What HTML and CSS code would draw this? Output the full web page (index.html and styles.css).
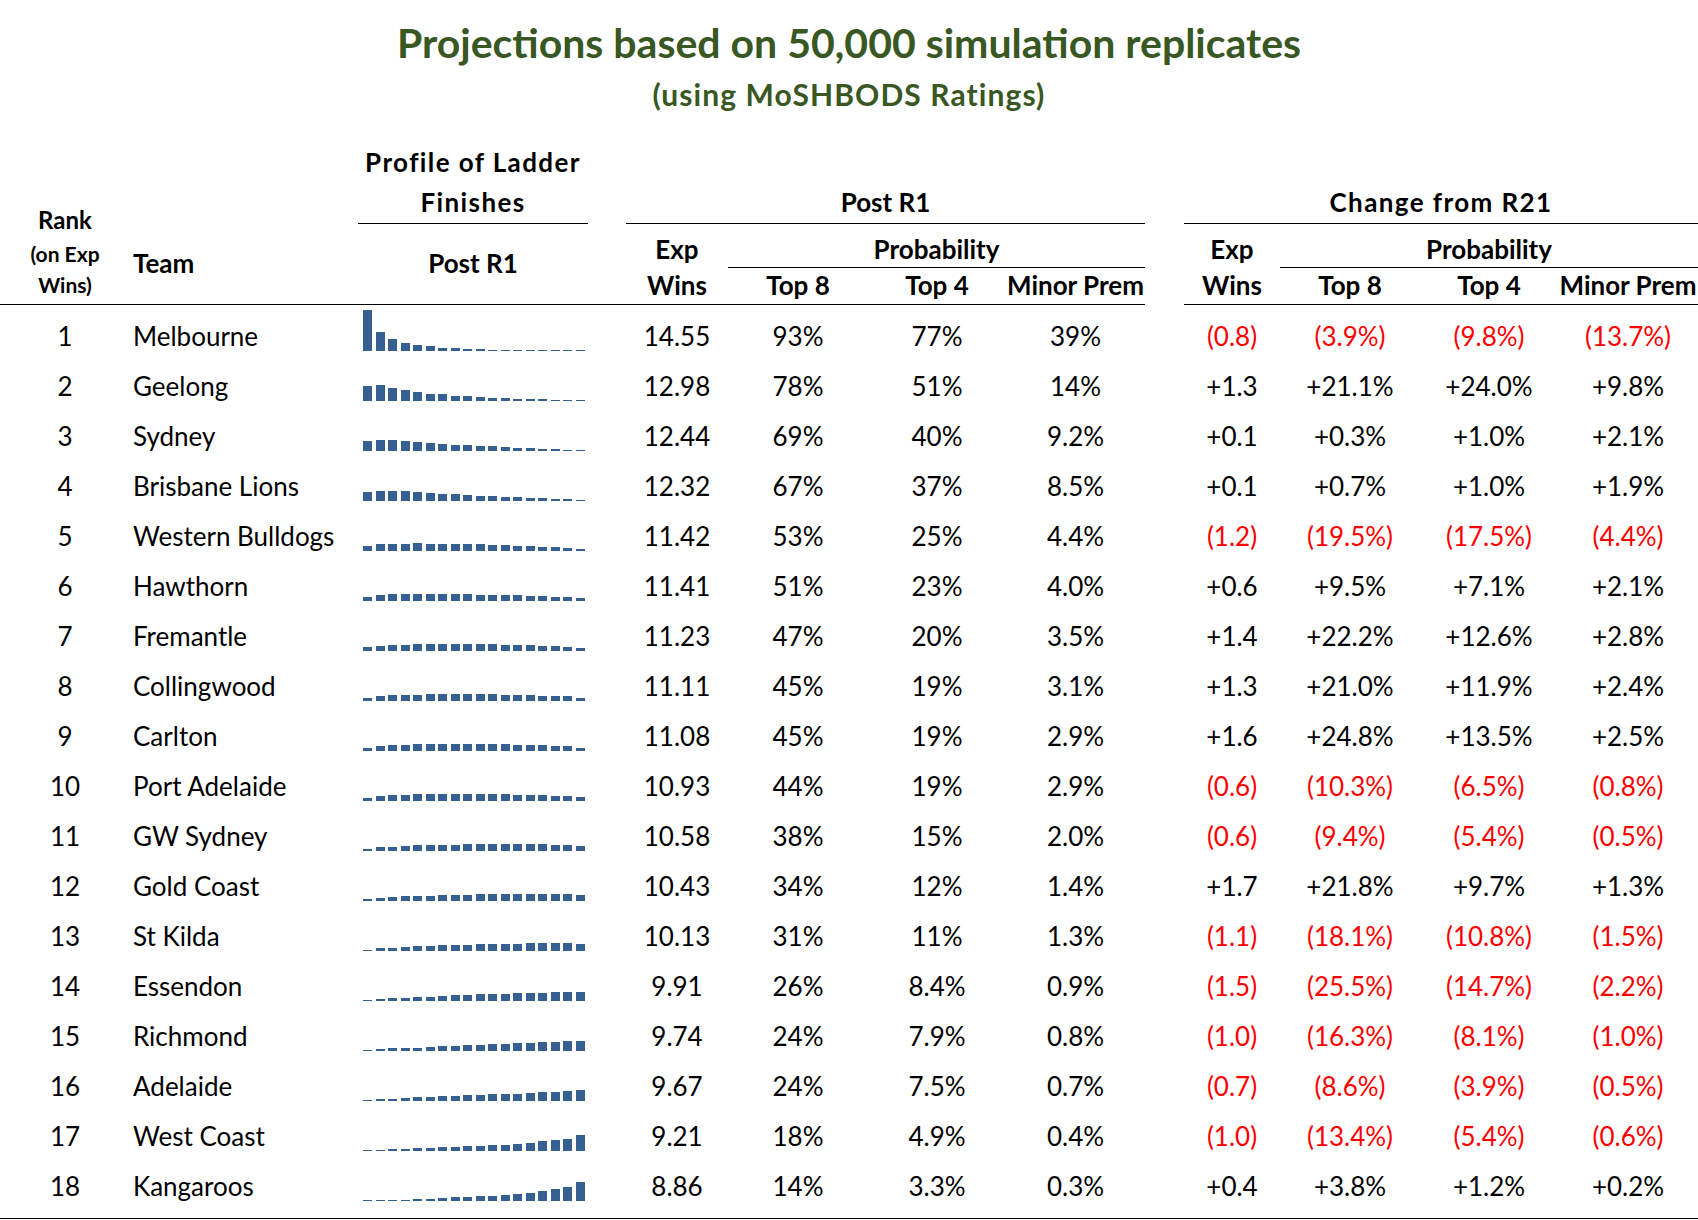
FILE: index.html
```html
<!DOCTYPE html>
<html lang="en">
<head>
<meta charset="utf-8">
<title>Projections based on 50,000 simulation replicates</title>
<link rel="stylesheet" href="styles.css">
</head>
<body>
<div class="titles">
  <div class="title">Projections based on 50,000 simulation replicates</div>
  <div class="subtitle">(using MoSHBODS Ratings)</div>
</div>

<div class="cols head">
  <div class="h-pl1 wide">Profile of Ladder</div>
  <div class="h-grp h-pl2 wide">Finishes</div>
  <div class="h-grp h-post">Post R1</div>
  <div class="h-grp h-chg wide">Change from R21</div>

  <div class="h-rank">
    <div class="rank-main">Rank</div>
    <div class="rank-sub first">(on Exp</div>
    <div class="rank-sub">Wins)</div>
  </div>
  <div class="h-team">Team</div>
  <div class="h-pl3">Post R1</div>
  <div class="h-gap"></div>

  <div class="h-top h-exp1">Exp</div>
  <div class="h-top h-prob h-prob1">Probability</div>
  <div class="h-bot h-col5">Wins</div>
  <div class="h-bot h-col6">Top 8</div>
  <div class="h-bot h-col7">Top 4</div>
  <div class="h-bot h-col8">Minor Prem</div>

  <div class="h-top h-exp2">Exp</div>
  <div class="h-top h-prob h-prob2">Probability</div>
  <div class="h-bot h-col10">Wins</div>
  <div class="h-bot h-col11">Top 8</div>
  <div class="h-bot h-col12">Top 4</div>
  <div class="h-bot h-col13">Minor Prem</div>
</div>

<div class="body">
  <div class="cols row">
    <div class="c">1</div><div class="team">Melbourne</div>
    <div class="spark"><i style="height:41px"></i><i style="height:19px"></i><i style="height:12px"></i><i style="height:8px"></i><i style="height:6px"></i><i style="height:5px"></i><i style="height:3px"></i><i style="height:3px"></i><i style="height:2px"></i><i style="height:2px"></i><i style="height:1px"></i><i style="height:1px"></i><i style="height:1px"></i><i style="height:1px"></i><i style="height:1px"></i><i style="height:1px"></i><i style="height:1px"></i><i style="height:1px"></i></div>
    <div></div><div class="c">14.55</div><div class="c">93%</div><div class="c">77%</div><div class="c">39%</div>
    <div></div><div class="c neg">(0.8)</div><div class="c neg">(3.9%)</div><div class="c neg">(9.8%)</div><div class="c neg">(13.7%)</div>
  </div>
  <div class="cols row">
    <div class="c">2</div><div class="team">Geelong</div>
    <div class="spark"><i style="height:15px"></i><i style="height:16px"></i><i style="height:13px"></i><i style="height:11px"></i><i style="height:9px"></i><i style="height:7px"></i><i style="height:7px"></i><i style="height:5px"></i><i style="height:5px"></i><i style="height:4px"></i><i style="height:3px"></i><i style="height:3px"></i><i style="height:2px"></i><i style="height:2px"></i><i style="height:2px"></i><i style="height:1px"></i><i style="height:1px"></i><i style="height:1px"></i></div>
    <div></div><div class="c">12.98</div><div class="c">78%</div><div class="c">51%</div><div class="c">14%</div>
    <div></div><div class="c">+1.3</div><div class="c">+21.1%</div><div class="c">+24.0%</div><div class="c">+9.8%</div>
  </div>
  <div class="cols row">
    <div class="c">3</div><div class="team">Sydney</div>
    <div class="spark"><i style="height:10px"></i><i style="height:11px"></i><i style="height:11px"></i><i style="height:10px"></i><i style="height:9px"></i><i style="height:8px"></i><i style="height:7px"></i><i style="height:6px"></i><i style="height:6px"></i><i style="height:5px"></i><i style="height:5px"></i><i style="height:4px"></i><i style="height:3px"></i><i style="height:3px"></i><i style="height:2px"></i><i style="height:2px"></i><i style="height:1px"></i><i style="height:1px"></i></div>
    <div></div><div class="c">12.44</div><div class="c">69%</div><div class="c">40%</div><div class="c">9.2%</div>
    <div></div><div class="c">+0.1</div><div class="c">+0.3%</div><div class="c">+1.0%</div><div class="c">+2.1%</div>
  </div>
  <div class="cols row">
    <div class="c">4</div><div class="team">Brisbane Lions</div>
    <div class="spark"><i style="height:9px"></i><i style="height:10px"></i><i style="height:10px"></i><i style="height:10px"></i><i style="height:9px"></i><i style="height:8px"></i><i style="height:7px"></i><i style="height:7px"></i><i style="height:6px"></i><i style="height:5px"></i><i style="height:5px"></i><i style="height:4px"></i><i style="height:4px"></i><i style="height:3px"></i><i style="height:3px"></i><i style="height:2px"></i><i style="height:2px"></i><i style="height:1px"></i></div>
    <div></div><div class="c">12.32</div><div class="c">67%</div><div class="c">37%</div><div class="c">8.5%</div>
    <div></div><div class="c">+0.1</div><div class="c">+0.7%</div><div class="c">+1.0%</div><div class="c">+1.9%</div>
  </div>
  <div class="cols row">
    <div class="c">5</div><div class="team">Western Bulldogs</div>
    <div class="spark"><i style="height:5px"></i><i style="height:7px"></i><i style="height:7px"></i><i style="height:7px"></i><i style="height:8px"></i><i style="height:7px"></i><i style="height:7px"></i><i style="height:7px"></i><i style="height:7px"></i><i style="height:7px"></i><i style="height:6px"></i><i style="height:6px"></i><i style="height:5px"></i><i style="height:5px"></i><i style="height:4px"></i><i style="height:4px"></i><i style="height:3px"></i><i style="height:2px"></i></div>
    <div></div><div class="c">11.42</div><div class="c">53%</div><div class="c">25%</div><div class="c">4.4%</div>
    <div></div><div class="c neg">(1.2)</div><div class="c neg">(19.5%)</div><div class="c neg">(17.5%)</div><div class="c neg">(4.4%)</div>
  </div>
  <div class="cols row">
    <div class="c">6</div><div class="team">Hawthorn</div>
    <div class="spark"><i style="height:4px"></i><i style="height:6px"></i><i style="height:7px"></i><i style="height:7px"></i><i style="height:7px"></i><i style="height:7px"></i><i style="height:7px"></i><i style="height:7px"></i><i style="height:7px"></i><i style="height:6px"></i><i style="height:6px"></i><i style="height:6px"></i><i style="height:6px"></i><i style="height:5px"></i><i style="height:5px"></i><i style="height:4px"></i><i style="height:4px"></i><i style="height:3px"></i></div>
    <div></div><div class="c">11.41</div><div class="c">51%</div><div class="c">23%</div><div class="c">4.0%</div>
    <div></div><div class="c">+0.6</div><div class="c">+9.5%</div><div class="c">+7.1%</div><div class="c">+2.1%</div>
  </div>
  <div class="cols row">
    <div class="c">7</div><div class="team">Fremantle</div>
    <div class="spark"><i style="height:4px"></i><i style="height:5px"></i><i style="height:6px"></i><i style="height:6px"></i><i style="height:7px"></i><i style="height:7px"></i><i style="height:7px"></i><i style="height:7px"></i><i style="height:7px"></i><i style="height:7px"></i><i style="height:7px"></i><i style="height:6px"></i><i style="height:6px"></i><i style="height:6px"></i><i style="height:5px"></i><i style="height:5px"></i><i style="height:4px"></i><i style="height:3px"></i></div>
    <div></div><div class="c">11.23</div><div class="c">47%</div><div class="c">20%</div><div class="c">3.5%</div>
    <div></div><div class="c">+1.4</div><div class="c">+22.2%</div><div class="c">+12.6%</div><div class="c">+2.8%</div>
  </div>
  <div class="cols row">
    <div class="c">8</div><div class="team">Collingwood</div>
    <div class="spark"><i style="height:3px"></i><i style="height:5px"></i><i style="height:6px"></i><i style="height:6px"></i><i style="height:6px"></i><i style="height:7px"></i><i style="height:7px"></i><i style="height:7px"></i><i style="height:7px"></i><i style="height:7px"></i><i style="height:7px"></i><i style="height:6px"></i><i style="height:6px"></i><i style="height:6px"></i><i style="height:5px"></i><i style="height:5px"></i><i style="height:5px"></i><i style="height:3px"></i></div>
    <div></div><div class="c">11.11</div><div class="c">45%</div><div class="c">19%</div><div class="c">3.1%</div>
    <div></div><div class="c">+1.3</div><div class="c">+21.0%</div><div class="c">+11.9%</div><div class="c">+2.4%</div>
  </div>
  <div class="cols row">
    <div class="c">9</div><div class="team">Carlton</div>
    <div class="spark"><i style="height:3px"></i><i style="height:5px"></i><i style="height:6px"></i><i style="height:6px"></i><i style="height:7px"></i><i style="height:7px"></i><i style="height:7px"></i><i style="height:7px"></i><i style="height:7px"></i><i style="height:7px"></i><i style="height:7px"></i><i style="height:7px"></i><i style="height:6px"></i><i style="height:6px"></i><i style="height:6px"></i><i style="height:5px"></i><i style="height:5px"></i><i style="height:3px"></i></div>
    <div></div><div class="c">11.08</div><div class="c">45%</div><div class="c">19%</div><div class="c">2.9%</div>
    <div></div><div class="c">+1.6</div><div class="c">+24.8%</div><div class="c">+13.5%</div><div class="c">+2.5%</div>
  </div>
  <div class="cols row">
    <div class="c">10</div><div class="team">Port Adelaide</div>
    <div class="spark"><i style="height:3px"></i><i style="height:5px"></i><i style="height:6px"></i><i style="height:6px"></i><i style="height:7px"></i><i style="height:7px"></i><i style="height:7px"></i><i style="height:7px"></i><i style="height:7px"></i><i style="height:7px"></i><i style="height:7px"></i><i style="height:7px"></i><i style="height:6px"></i><i style="height:6px"></i><i style="height:6px"></i><i style="height:5px"></i><i style="height:5px"></i><i style="height:4px"></i></div>
    <div></div><div class="c">10.93</div><div class="c">44%</div><div class="c">19%</div><div class="c">2.9%</div>
    <div></div><div class="c neg">(0.6)</div><div class="c neg">(10.3%)</div><div class="c neg">(6.5%)</div><div class="c neg">(0.8%)</div>
  </div>
  <div class="cols row">
    <div class="c">11</div><div class="team">GW Sydney</div>
    <div class="spark"><i style="height:2px"></i><i style="height:4px"></i><i style="height:4px"></i><i style="height:5px"></i><i style="height:6px"></i><i style="height:6px"></i><i style="height:6px"></i><i style="height:6px"></i><i style="height:7px"></i><i style="height:7px"></i><i style="height:7px"></i><i style="height:7px"></i><i style="height:7px"></i><i style="height:7px"></i><i style="height:7px"></i><i style="height:6px"></i><i style="height:6px"></i><i style="height:5px"></i></div>
    <div></div><div class="c">10.58</div><div class="c">38%</div><div class="c">15%</div><div class="c">2.0%</div>
    <div></div><div class="c neg">(0.6)</div><div class="c neg">(9.4%)</div><div class="c neg">(5.4%)</div><div class="c neg">(0.5%)</div>
  </div>
  <div class="cols row">
    <div class="c">12</div><div class="team">Gold Coast</div>
    <div class="spark"><i style="height:2px"></i><i style="height:3px"></i><i style="height:4px"></i><i style="height:5px"></i><i style="height:5px"></i><i style="height:5px"></i><i style="height:6px"></i><i style="height:6px"></i><i style="height:6px"></i><i style="height:7px"></i><i style="height:7px"></i><i style="height:7px"></i><i style="height:7px"></i><i style="height:7px"></i><i style="height:7px"></i><i style="height:7px"></i><i style="height:7px"></i><i style="height:6px"></i></div>
    <div></div><div class="c">10.43</div><div class="c">34%</div><div class="c">12%</div><div class="c">1.4%</div>
    <div></div><div class="c">+1.7</div><div class="c">+21.8%</div><div class="c">+9.7%</div><div class="c">+1.3%</div>
  </div>
  <div class="cols row">
    <div class="c">13</div><div class="team">St Kilda</div>
    <div class="spark"><i style="height:1px"></i><i style="height:3px"></i><i style="height:3px"></i><i style="height:4px"></i><i style="height:5px"></i><i style="height:5px"></i><i style="height:6px"></i><i style="height:6px"></i><i style="height:6px"></i><i style="height:7px"></i><i style="height:7px"></i><i style="height:7px"></i><i style="height:7px"></i><i style="height:8px"></i><i style="height:8px"></i><i style="height:8px"></i><i style="height:8px"></i><i style="height:7px"></i></div>
    <div></div><div class="c">10.13</div><div class="c">31%</div><div class="c">11%</div><div class="c">1.3%</div>
    <div></div><div class="c neg">(1.1)</div><div class="c neg">(18.1%)</div><div class="c neg">(10.8%)</div><div class="c neg">(1.5%)</div>
  </div>
  <div class="cols row">
    <div class="c">14</div><div class="team">Essendon</div>
    <div class="spark"><i style="height:1px"></i><i style="height:2px"></i><i style="height:3px"></i><i style="height:3px"></i><i style="height:4px"></i><i style="height:4px"></i><i style="height:5px"></i><i style="height:6px"></i><i style="height:6px"></i><i style="height:7px"></i><i style="height:7px"></i><i style="height:7px"></i><i style="height:8px"></i><i style="height:8px"></i><i style="height:8px"></i><i style="height:9px"></i><i style="height:9px"></i><i style="height:9px"></i></div>
    <div></div><div class="c">9.91</div><div class="c">26%</div><div class="c">8.4%</div><div class="c">0.9%</div>
    <div></div><div class="c neg">(1.5)</div><div class="c neg">(25.5%)</div><div class="c neg">(14.7%)</div><div class="c neg">(2.2%)</div>
  </div>
  <div class="cols row">
    <div class="c">15</div><div class="team">Richmond</div>
    <div class="spark"><i style="height:1px"></i><i style="height:2px"></i><i style="height:3px"></i><i style="height:3px"></i><i style="height:3px"></i><i style="height:4px"></i><i style="height:5px"></i><i style="height:5px"></i><i style="height:6px"></i><i style="height:6px"></i><i style="height:7px"></i><i style="height:7px"></i><i style="height:8px"></i><i style="height:8px"></i><i style="height:9px"></i><i style="height:9px"></i><i style="height:10px"></i><i style="height:10px"></i></div>
    <div></div><div class="c">9.74</div><div class="c">24%</div><div class="c">7.9%</div><div class="c">0.8%</div>
    <div></div><div class="c neg">(1.0)</div><div class="c neg">(16.3%)</div><div class="c neg">(8.1%)</div><div class="c neg">(1.0%)</div>
  </div>
  <div class="cols row">
    <div class="c">16</div><div class="team">Adelaide</div>
    <div class="spark"><i style="height:1px"></i><i style="height:2px"></i><i style="height:2px"></i><i style="height:3px"></i><i style="height:4px"></i><i style="height:4px"></i><i style="height:5px"></i><i style="height:5px"></i><i style="height:6px"></i><i style="height:6px"></i><i style="height:7px"></i><i style="height:7px"></i><i style="height:7px"></i><i style="height:8px"></i><i style="height:9px"></i><i style="height:9px"></i><i style="height:10px"></i><i style="height:11px"></i></div>
    <div></div><div class="c">9.67</div><div class="c">24%</div><div class="c">7.5%</div><div class="c">0.7%</div>
    <div></div><div class="c neg">(0.7)</div><div class="c neg">(8.6%)</div><div class="c neg">(3.9%)</div><div class="c neg">(0.5%)</div>
  </div>
  <div class="cols row">
    <div class="c">17</div><div class="team">West Coast</div>
    <div class="spark"><i style="height:1px"></i><i style="height:1px"></i><i style="height:2px"></i><i style="height:2px"></i><i style="height:3px"></i><i style="height:3px"></i><i style="height:4px"></i><i style="height:4px"></i><i style="height:5px"></i><i style="height:5px"></i><i style="height:6px"></i><i style="height:6px"></i><i style="height:7px"></i><i style="height:8px"></i><i style="height:10px"></i><i style="height:11px"></i><i style="height:12px"></i><i style="height:16px"></i></div>
    <div></div><div class="c">9.21</div><div class="c">18%</div><div class="c">4.9%</div><div class="c">0.4%</div>
    <div></div><div class="c neg">(1.0)</div><div class="c neg">(13.4%)</div><div class="c neg">(5.4%)</div><div class="c neg">(0.6%)</div>
  </div>
  <div class="cols row">
    <div class="c">18</div><div class="team">Kangaroos</div>
    <div class="spark"><i style="height:1px"></i><i style="height:1px"></i><i style="height:1px"></i><i style="height:1px"></i><i style="height:2px"></i><i style="height:2px"></i><i style="height:3px"></i><i style="height:4px"></i><i style="height:4px"></i><i style="height:5px"></i><i style="height:5px"></i><i style="height:6px"></i><i style="height:7px"></i><i style="height:8px"></i><i style="height:10px"></i><i style="height:12px"></i><i style="height:14px"></i><i style="height:19px"></i></div>
    <div></div><div class="c">8.86</div><div class="c">14%</div><div class="c">3.3%</div><div class="c">0.3%</div>
    <div></div><div class="c">+0.4</div><div class="c">+3.8%</div><div class="c">+1.2%</div><div class="c">+0.2%</div>
  </div>
</div>
</body>
</html>
```

FILE: styles.css
```css
html, body {
  margin: 0;
  padding: 0;
  background: #ffffff;
  overflow: hidden;
}

body {
  width: 1698px;
  font-family: Lato, "Open Sans", "Liberation Sans", sans-serif;
  color: #000000;
}

/* ---------- titles ---------- */
.titles {
  padding-top: 19px;
  text-align: center;
  color: #385723;
  font-weight: 700;
}

.title {
  font-size: 41px;
  line-height: 47px;
}

.subtitle {
  margin-top: 12px;
  font-size: 30px;
  line-height: 32px;
  letter-spacing: 1.1px;
}

/* ---------- shared column template ---------- */
.cols {
  display: grid;
  grid-template-columns: 130px 228px 230px 38px 102px 140px 138px 139px 39px 96px 140px 138px 140px;
}

/* ---------- header ---------- */
.head {
  margin-top: 32px;
  grid-template-rows: 40px 42px 44px 37px;
  font-size: 26px;
  font-weight: 700;
  text-align: center;
  white-space: nowrap;
}

.wide {
  letter-spacing: 1.4px;
}

.h-pl1 {
  grid-column: 3;
  grid-row: 1;
  line-height: 40px;
}

.h-grp {
  grid-row: 2;
  line-height: 40px;
  border-bottom: 1px solid #000;
}

.h-pl2 { grid-column: 3; }
.h-post { grid-column: 5 / 9; }
.h-chg { grid-column: 10 / 14; }

.h-rank {
  grid-column: 1;
  grid-row: 2 / 5;
  padding-top: 22px;
  border-bottom: 1px solid #000;
}

.rank-main {
  font-size: 24px;
  line-height: 32px;
}

.rank-sub {
  font-size: 21px;
  line-height: 31px;
}

.rank-sub.first {
  margin-top: 2px;
}

.h-team {
  grid-column: 2;
  grid-row: 3 / 5;
  text-align: left;
  padding: 21px 0 0 3px;
  line-height: 36px;
  border-bottom: 1px solid #000;
}

.h-pl3 {
  grid-column: 3;
  grid-row: 3 / 5;
  padding-top: 21px;
  line-height: 36px;
  border-bottom: 1px solid #000;
}

.h-gap {
  grid-column: 4;
  grid-row: 4;
  border-bottom: 1px solid #000;
}

.h-top {
  grid-row: 3;
  padding-top: 7px;
  line-height: 36px;
}

.h-prob {
  border-bottom: 1px solid #000;
}

.h-exp1 { grid-column: 5; }
.h-prob1 { grid-column: 6 / 9; }
.h-exp2 { grid-column: 10; }
.h-prob2 { grid-column: 11 / 14; }

.h-bot {
  grid-row: 4;
  line-height: 34px;
  border-bottom: 1px solid #000;
}

.h-col5 { grid-column: 5; }
.h-col6 { grid-column: 6; }
.h-col7 { grid-column: 7; }
.h-col8 { grid-column: 8; }
.h-col10 { grid-column: 10; }
.h-col11 { grid-column: 11; }
.h-col12 { grid-column: 12; }
.h-col13 { grid-column: 13; }

/* ---------- body rows ---------- */
.body {
  padding: 6px 0 7px;
  border-bottom: 1px solid #000;
}

.row {
  height: 50px;
  font-size: 26px;
  line-height: 50px;
  white-space: nowrap;
}

.c {
  text-align: center;
}

.team {
  padding-left: 3px;
}

.neg {
  color: #ff0000;
}

.spark {
  display: flex;
  align-items: flex-end;
  gap: 3.5px;
  box-sizing: border-box;
  height: 50px;
  padding: 0 0 10px 5px;
}

.spark i {
  display: block;
  flex: none;
  width: 9px;
  background: #376092;
}
```
